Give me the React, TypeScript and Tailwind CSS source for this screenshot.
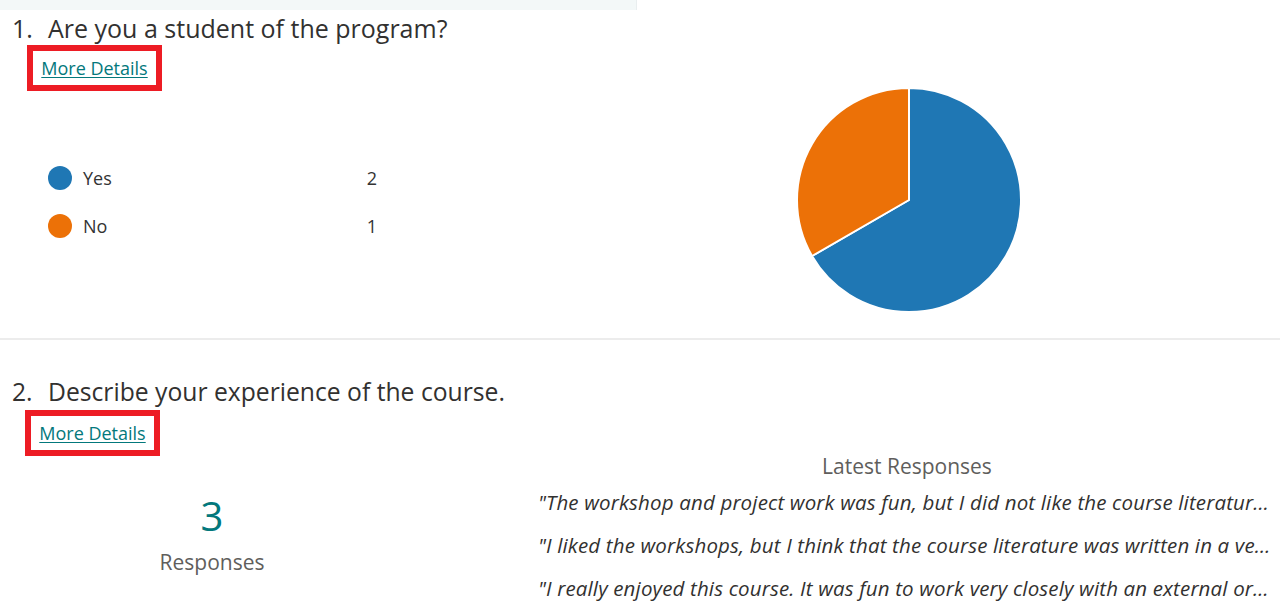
import React from "react";

const FONT = { fontFamily: '"Open Sans", "Noto Sans", sans-serif' };

const LEGEND = [
  { label: "Yes", count: 2, color: "bg-[#1f77b4]" },
  { label: "No", count: 1, color: "bg-[#ec7107]" },
];

const RESPONSES = [
  '"The workshop and project work was fun, but I did not like the course literature, it was too long and boring."',
  '"I liked the workshops, but I think that the course literature was written in a very old fashioned way."',
  '"I really enjoyed this course. It was fun to work very closely with an external organisation."',
];

function MoreDetails() {
  return (
    <div className="flex items-center justify-center w-[135px] h-[46px] border-[6px] border-[#ed1c24]">
      <a href="#" className="text-[18px] leading-[24px] text-[#03787c] underline underline-offset-2">
        More Details
      </a>
    </div>
  );
}

function Pie() {
  // 2 of 3 = 240 degrees, starting at 12 o'clock
  return (
    <svg width="228" height="228" viewBox="-114 -114 228 228" className="block">
      <path d="M0 0 L0 -112 A112 112 0 1 1 -97 56 Z" fill="#1f77b4" stroke="#fff" strokeWidth="2" strokeLinejoin="round" />
      <path d="M0 0 L-97 56 A112 112 0 0 1 0 -112 Z" fill="#ec7107" stroke="#fff" strokeWidth="2" strokeLinejoin="round" />
    </svg>
  );
}

export default function App() {
  return (
    <div className="w-[1280px] h-[608px] bg-white overflow-hidden text-[#323130]" style={FONT}>
      <div className="h-[10px] w-[637px] bg-[#f3f8f8] border-r border-[#e9eeef]" />

      {/* Question 1 */}
      <section className="h-[330px] border-b-2 border-[#ececec]">
        <h2 className="pl-[12px] pt-[1px] text-[25px] leading-[34px] flex">
          <span className="w-[36px]">1.</span>
          <span>Are you a student of the program?</span>
        </h2>
        <div className="flex">
          <div className="w-[637px]">
            <div className="flex pl-[27px]">
              <MoreDetails />
            </div>
            <ul className="mt-[75px] pl-[48px] w-[377px] flex flex-col gap-[24px]">
              {LEGEND.map((item) => (
                <li key={item.label} className="flex items-center h-[24px] text-[18px] text-[#333]">
                  <span className={`w-[24px] h-[24px] rounded-full ${item.color}`} />
                  <span className="ml-[11px] flex-1">{item.label}</span>
                  <span>{item.count}</span>
                </li>
              ))}
            </ul>
          </div>
          <div className="pl-[158px] pt-[41px]">
            <Pie />
          </div>
        </div>
      </section>

      {/* Question 2 */}
      <section>
        <h2 className="pl-[12px] pt-[35px] text-[24.7px] leading-[34px] flex">
          <span className="w-[36px]">2.</span>
          <span>Describe your experience of the course.</span>
        </h2>
        <div className="flex pl-[25px] pt-[1px]">
          <MoreDetails />
        </div>
        <div className="flex">
          <div className="w-[424px] flex flex-col items-center pt-[36px]">
            <div className="text-[40px] leading-[48px] text-[#03787c]">3</div>
            <div className="text-[21px] leading-[30px] text-[#605e5c] mt-[7px]">Responses</div>
          </div>
          <div className="flex-1 min-w-0 pl-[114px] pr-[4px]">
            <div className="text-center text-[21px] leading-[28px] text-[#605e5c] -mt-[4px]">Latest Responses</div>
            <div className="flex flex-col gap-[13px] mt-[7px]">
              {RESPONSES.map((r) => (
                <p key={r} className="italic text-[20.5px] leading-[30px] tracking-[0.15px] truncate">
                  {r}
                </p>
              ))}
            </div>
          </div>
        </div>
      </section>
    </div>
  );
}
